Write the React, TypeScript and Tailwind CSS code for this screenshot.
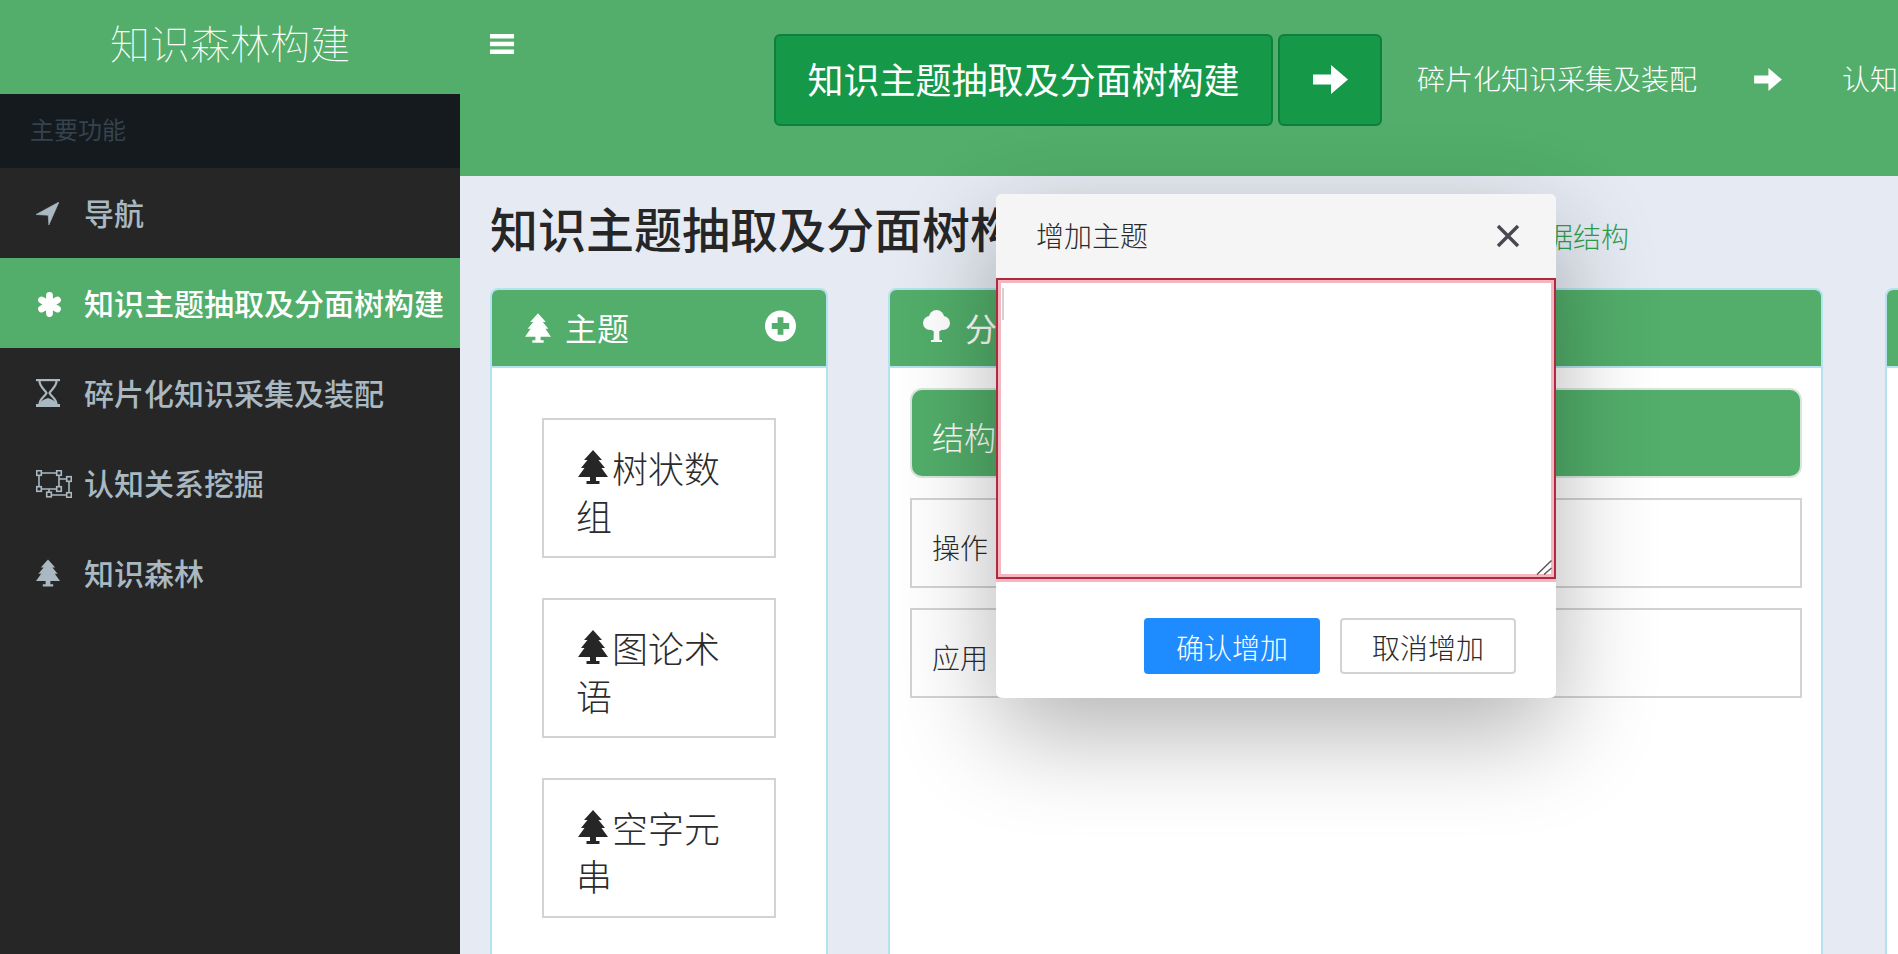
import React from "react";

const Conifer = ({ className = "" }: { className?: string }) => (
  <svg viewBox="0 0 30 34" className={className} fill="currentColor">
    <path d="M15 0 L24 10 H20.5 L27 18 H23.5 L30 27 H18 V31 H21.5 V34 H8.5 V31 H12 V27 H0 L6.5 18 H3 L9.5 10 H6 Z" />
  </svg>
);

const Deciduous = ({ className = "" }: { className?: string }) => (
  <svg viewBox="0 0 27 32" className={className} fill="currentColor">
    <circle cx="13.5" cy="7.5" r="7.5" />
    <circle cx="7" cy="13" r="7" />
    <circle cx="20" cy="13" r="7" />
    <circle cx="13.5" cy="15" r="7" />
    <path d="M11 16 H16 L16.5 30 H19 V32 H8 V30 H10.5 Z" />
  </svg>
);

const ArrowRight = ({ className = "" }: { className?: string }) => (
  <svg viewBox="0 0 35 29" className={className} fill="currentColor">
    <path d="M0 9.5 H18 V0 L35 14.5 L18 29 V19.5 H0 Z" />
  </svg>
);

const Send = ({ className = "" }: { className?: string }) => (
  <svg viewBox="0 0 22 22" className={className} fill="currentColor">
    <path d="M22 0 L0 12 L11.7 12.7 L12.3 22 Z" strokeLinejoin="round" stroke="currentColor" strokeWidth="0.6" />
  </svg>
);

const Asterisk = ({ className = "" }: { className?: string }) => (
  <svg viewBox="0 0 22 22" className={className} stroke="currentColor" strokeWidth="6" strokeLinecap="round">
    <path d="M11 3 V19 M4 7 L18 15 M18 7 L4 15" />
  </svg>
);

const Hourglass = ({ className = "" }: { className?: string }) => (
  <svg viewBox="0 0 24 28" className={className}>
    <rect width="24" height="2.2" fill="currentColor" />
    <rect y="25" width="24" height="3" fill="currentColor" />
    <path d="M3.5 2 C3.5 8 9 10.5 10.5 14 C9 17.5 3.5 20 3.5 25 M20.5 2 C20.5 8 15 10.5 13.5 14 C15 17.5 20.5 20 20.5 25" fill="none" stroke="currentColor" strokeWidth="2.2" />
    <path d="M3.5 25 C4 22 9 20 12 19 C15 20 20 22 20.5 25 Z" fill="currentColor" />
  </svg>
);

const Transform = ({ className = "" }: { className?: string }) => (
  <svg viewBox="0 0 36 28" className={className} fill="none" stroke="currentColor" strokeWidth="1.6">
    <path d="M3 3 H23 V19 H3 Z M23 9 H33 V25 H13 V19" />
    {[
      [3, 3],
      [23, 3],
      [3, 19],
      [23, 19],
      [33, 9],
      [13, 24.5],
      [33, 25],
    ].map(([x, y], i) => (
      <rect key={i} x={x - 2.3} y={y - 2.3} width="4.6" height="4.6" fill="#262626" />
    ))}
  </svg>
);

const nav = [
  { label: "导航", icon: <Send className="w-[23px] h-[23px]" /> },
  { label: "知识主题抽取及分面树构建", icon: <Asterisk className="w-[25px] h-[25px] ml-[1px] mt-[2px]" />, active: true },
  { label: "碎片化知识采集及装配", icon: <Hourglass className="w-[24px] h-[28px]" /> },
  { label: "认知关系挖掘", icon: <Transform className="w-[36px] h-[28px] mt-[2px]" /> },
  { label: "知识森林", icon: <Conifer className="w-[24px] h-[28px]" /> },
];

const topics = [
  { first: "树状数", rest: "组" },
  { first: "图论术", rest: "语" },
  { first: "空字元", rest: "串" },
];

export default function App() {
  return (
    <div className="relative flex w-[1898px] h-[954px] overflow-hidden bg-[#e6ebf3] text-[#262626] [font-family:'Noto_Sans_CJK_SC',sans-serif]">
      <aside className="w-[460px] shrink-0 bg-[#262626] flex flex-col">
        <div className="h-[94px] shrink-0 bg-[#52ae6a] flex items-center justify-center pb-[10px] text-white text-[40px] font-thin">
          知识森林构建
        </div>
        <div className="h-[74px] shrink-0 bg-[#151a1e] flex items-center pl-[30px] pb-[4px] text-[24px] text-[#34434d]">主要功能</div>
        {nav.map((n) => (
          <div
            key={n.label}
            className={
              n.active
                ? "h-[90px] shrink-0 flex items-center pl-[36px] bg-[#52ae6a] text-white text-[30px] font-medium"
                : "h-[90px] shrink-0 flex items-center pl-[36px] text-[#a9b8c1] text-[30px] font-medium"
            }
          >
            <span className="w-[48px] shrink-0 flex items-center">{n.icon}</span>
            <span className="leading-none whitespace-nowrap mb-[3px]">{n.label}</span>
          </div>
        ))}
      </aside>

      <div className="flex-1 min-w-0 flex flex-col">
        <header className="h-[176px] shrink-0 bg-[#52ae6a] flex items-start pl-[30px] pt-[34px] text-white overflow-hidden">
          <svg viewBox="0 0 24 20" className="w-[24px] h-[20px] shrink-0" fill="currentColor">
            <rect width="24" height="4.5" />
            <rect y="7.7" width="24" height="4.5" />
            <rect y="15.5" width="24" height="4.5" />
          </svg>
          <button className="ml-[260px] w-[499px] h-[92px] shrink-0 rounded-[6px] bg-[#159848] border-2 border-[#0f7f3c] pb-[4px] text-[36px] leading-none font-normal text-white whitespace-nowrap">
            知识主题抽取及分面树构建
          </button>
          <button className="ml-[5px] w-[104px] h-[92px] shrink-0 rounded-[6px] bg-[#159848] border-2 border-[#0f7f3c] pb-[2px] flex items-center justify-center">
            <ArrowRight className="w-[35px] h-[29px]" />
          </button>
          <span className="ml-[35px] h-[92px] pb-[4px] flex items-center text-[28px] font-light whitespace-nowrap shrink-0">碎片化知识采集及装配</span>
          <span className="ml-[57px] h-[92px] pb-[2px] flex items-center shrink-0">
            <ArrowRight className="w-[28px] h-[23px]" />
          </span>
          <span className="ml-[60px] h-[92px] pb-[4px] flex items-center text-[28px] font-light whitespace-nowrap shrink-0">认知关系挖掘</span>
        </header>

        <main className="flex-1 min-h-0 overflow-hidden pl-[30px]">
          <h1 className="h-[112px] pt-[20px] leading-[62px] text-[48px] font-medium whitespace-nowrap">
            知识主题抽取及分面树构建
            <small className="ml-[451px] text-[28px] font-light text-[#2f9e4f]">数据结构</small>
          </h1>

          <div className="flex gap-[60px] items-start">
            <section className="w-[338px] h-[800px] shrink-0 bg-white border-2 border-[#b4e2ef] rounded-[8px] overflow-hidden">
              <div className="h-[76px] bg-[#52ae6a] flex items-center pl-[33px] pr-[30px] text-white">
                <Conifer className="w-[26px] h-[30px] shrink-0" />
                <span className="ml-[14px] mb-[2px] text-[32px] leading-none">主题</span>
                <svg viewBox="0 0 32 32" className="ml-auto w-[31px] h-[32px] mb-[4px]">
                  <circle cx="16" cy="16" r="16" fill="#fff" />
                  <path d="M13 7 H19 V13 H25 V19 H19 V25 H13 V19 H7 V13 H13 Z" fill="#52ae6a" />
                </svg>
              </div>
              <div className="border-t-2 border-[#b4e2ef] pt-[50px] px-[50px] flex flex-col gap-[40px]">
                {topics.map((t) => (
                  <div key={t.first} className="h-[140px] border-2 border-[#d3d3d3] pt-[23px] px-[32px] text-[36px] leading-[48px] text-[#2b2b2b] font-light">
                    <span className="inline-block w-[36px] align-[-1px]">
                      <Conifer className="w-[30px] h-[34px] ml-[2px] text-[#262626]" />
                    </span>
                    {t.first}
                    {t.rest}
                  </div>
                ))}
              </div>
            </section>

            <section className="w-[935px] h-[800px] shrink-0 bg-white border-2 border-[#b4e2ef] rounded-[8px] overflow-hidden">
              <div className="h-[76px] bg-[#52ae6a] flex items-center pl-[33px] text-white">
                <Deciduous className="w-[27px] h-[32px] shrink-0 mb-[4px]" />
                <span className="ml-[15px] mb-[2px] text-[32px] leading-none">分面</span>
              </div>
              <div className="border-t-2 border-[#b4e2ef] pt-[20px] pl-[20px] pr-[19px] flex flex-col gap-[20px]">
                <div className="h-[90px] bg-[#52ae6a] border-2 border-[#d9e6dd] rounded-[12px] flex items-center pl-[20px] pt-[6px] text-white text-[32px] font-light">
                  结构
                </div>
                <div className="h-[90px] border-2 border-[#d3d3d3] flex items-center pl-[20px] pt-[7px] text-[28px] font-light text-[#2b2b2b]">操作</div>
                <div className="h-[90px] border-2 border-[#d3d3d3] flex items-center pl-[20px] pt-[7px] text-[28px] font-light text-[#2b2b2b]">应用</div>
              </div>
            </section>

            <section className="w-[300px] h-[800px] ml-[2px] shrink-0 bg-white border-2 border-[#b4e2ef] rounded-[8px] overflow-hidden">
              <div className="h-[76px] bg-[#52ae6a]" />
              <div className="border-t-2 border-[#b4e2ef]" />
            </section>
          </div>
        </main>
      </div>

      <div className="absolute left-[996px] top-[194px] w-[560px] h-[504px] bg-white rounded-[6px] shadow-[0_35px_100px_rgba(0,0,0,0.3)] flex flex-col">
        <div className="h-[84px] shrink-0 bg-[#f5f5f5] rounded-t-[6px] flex items-center pl-[40px] pr-[36px] text-[#2b2b2b]">
          <span className="text-[28px] font-light leading-none mb-[2px]">增加主题</span>
          <svg viewBox="0 0 24 24" className="ml-auto w-[24px] h-[24px]" stroke="#484852" strokeWidth="3.4" fill="none">
            <path d="M2 2 L22 22 M22 2 L2 22" />
          </svg>
        </div>
        <div className="relative h-[301px] shrink-0">
          <textarea
            aria-label="增加主题"
            className="block w-full h-full bg-white border-2 border-[#b02a3e] outline-none resize-none shadow-[inset_0_0_0_3px_#f4b6c0,0_3px_0_0_#f4b6c0]"
          />
          <span className="absolute left-[6px] top-[10px] w-[2px] h-[32px] bg-[#d3d3d3]" />
          <svg viewBox="0 0 16 15" className="absolute right-[4px] bottom-[4px] w-[16px] h-[15px]" stroke="#555" strokeWidth="1.4" fill="none">
            <path d="M15.5 0.5 L1 14.5 M15.5 8 L8 14.5" />
          </svg>
        </div>
        <div className="flex-1 flex items-start justify-end gap-[20px] pt-[39px] pr-[40px]">
          <button className="w-[176px] h-[56px] pt-[2px] rounded-[4px] bg-[#1e8cff] text-white text-[28px] font-light leading-none">确认增加</button>
          <button className="w-[176px] h-[56px] pt-[2px] rounded-[4px] bg-white border-2 border-[#d3d3d3] text-[#2b2b2b] text-[28px] font-light leading-none">取消增加</button>
        </div>
      </div>
    </div>
  );
}
